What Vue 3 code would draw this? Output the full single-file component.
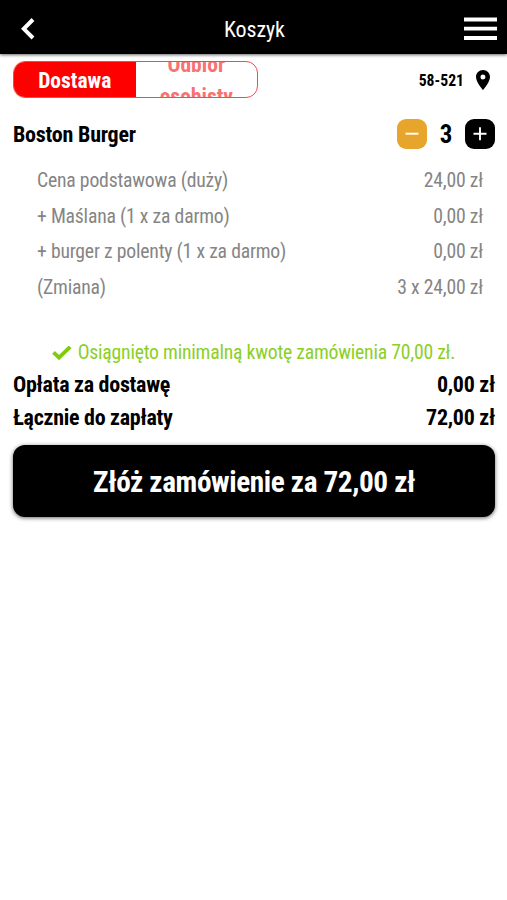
<template>
  <div class="cart-page">
    <header class="cart-header">
      <button class="icon-btn" type="button">
        <svg width="14" height="22" viewBox="0 0 14 22">
          <path d="M12 1.5L2.8 10.8L12 20" fill="none" stroke="#fff" stroke-width="4" />
        </svg>
      </button>
      <h1 class="header-title">Koszyk</h1>
      <button class="icon-btn" type="button">
        <svg width="34" height="24" viewBox="0 0 34 24">
          <path d="M1 2.5H34M1 11.7H34M1 21H34" stroke="#fff" stroke-width="3.8" />
        </svg>
      </button>
    </header>

    <section class="delivery-bar">
      <div class="delivery-switch">
        <button
          v-for="mode in modes"
          :key="mode"
          class="switch-item"
          :class="{ active: mode === activeMode }"
          type="button"
          @click="activeMode = mode"
        >
          <span>{{ mode }}</span>
        </button>
      </div>
      <div class="location">
        <span>58-521</span>
        <svg width="14" height="20" viewBox="5 2 14 20">
          <path
            d="M12 2C8.13 2 5 5.13 5 9c0 5.25 7 13 7 13s7-7.75 7-13c0-3.87-3.13-7-7-7zm0 9.5a2.5 2.5 0 1 1 0-5 2.5 2.5 0 0 1 0 5z"
          />
        </svg>
      </div>
    </section>

    <section class="product">
      <h2 class="product-name">Boston Burger</h2>
      <div class="counter">
        <button class="counter-btn minus" type="button">
          <svg width="14" height="14" viewBox="0 0 14 14">
            <path d="M0.5 6.7H13.5" stroke="#fff" stroke-width="1.9" />
          </svg>
        </button>
        <span class="counter-value">3</span>
        <button class="counter-btn" type="button">
          <svg width="14" height="14" viewBox="0 0 14 14">
            <path d="M0.5 6.7H13.5M7 0.2V13.2" stroke="#fff" stroke-width="1.9" />
          </svg>
        </button>
      </div>
    </section>

    <ul class="details">
      <li v-for="item in details" :key="item.label">
        <span>{{ item.label }}</span>
        <span>{{ item.price }}</span>
      </li>
    </ul>

    <p class="minimum">
      <svg width="20" height="15" viewBox="0 0 20 15">
        <path d="M1.5 6.4L7 11.6L18.2 0.9" fill="none" stroke="#7fcc0d" stroke-width="3.9" />
      </svg>
      <span>Osiągnięto minimalną kwotę zamówienia 70,00 zł.</span>
    </p>

    <div class="summary">
      <div v-for="row in summary" :key="row.label" class="summary-row">
        <span>{{ row.label }}</span>
        <span>{{ row.price }}</span>
      </div>
    </div>

    <button class="order-btn" type="button">Złóż zamówienie za 72,00 zł</button>
  </div>
</template>

<script setup>
import { ref } from "vue";

const modes = ["Dostawa", "Odbiór osobisty"];
const activeMode = ref("Dostawa");

const details = [
  { label: "Cena podstawowa (duży)", price: "24,00 zł" },
  { label: "+ Maślana (1 x za darmo)", price: "0,00 zł" },
  { label: "+ burger z polenty (1 x za darmo)", price: "0,00 zł" },
  { label: "(Zmiana)", price: "3 x 24,00 zł" },
];

const summary = [
  { label: "Opłata za dostawę", price: "0,00 zł" },
  { label: "Łącznie do zapłaty", price: "72,00 zł" },
];
</script>

<style>
body {
  background: #fff;
}
</style>

<style scoped>
.cart-page {
  min-height: 900px;
  font-family: "Roboto Condensed", Roboto, sans-serif;
  font-stretch: 75%;
  color: #000;
  background: #fff;
}

button {
  font: inherit;
  border: none;
  padding: 0;
  background: none;
  cursor: pointer;
}

svg {
  display: block;
  flex-shrink: 0;
}

/* header */
.cart-header {
  box-sizing: border-box;
  height: 54px;
  padding: 3px 10px 0 21px;
  display: grid;
  grid-template-columns: 203px auto 1fr;
  align-items: center;
  background: #000;
  box-shadow: 0 1px 3px rgba(0, 0, 0, 0.6);
}

.icon-btn {
  justify-self: start;
}

.icon-btn:last-child {
  justify-self: end;
}

.header-title {
  margin: 0;
  padding-top: 2px;
  font-size: 22px;
  font-weight: 400;
  letter-spacing: -0.1px;
  color: #fff;
}

/* delivery switch */
.delivery-bar {
  display: flex;
  justify-content: space-between;
  align-items: center;
  padding: 7px 17px 0 13px;
}

.delivery-switch {
  box-sizing: border-box;
  width: 245px;
  height: 37px;
  display: flex;
  border: 1px solid #f44;
  border-radius: 12px;
  overflow: hidden;
}

.switch-item {
  flex: 1;
  min-width: 0;
  display: flex;
  align-items: center;
  justify-content: center;
  padding: 2px 20px 0;
  font-size: 21.5px;
  line-height: 32px;
  font-weight: 700;
  color: #f87272;
}

.switch-item.active {
  color: #fff;
  background: #f00;
}

.location {
  display: flex;
  align-items: center;
  gap: 12px;
  padding-top: 1px;
  font-size: 15.7px;
  font-weight: 700;
}

/* product */
.product {
  display: flex;
  justify-content: space-between;
  align-items: center;
  padding: 20px 12px 0 13px;
}

.product-name {
  margin: 0;
  font-size: 22px;
  font-weight: 700;
  letter-spacing: -0.22px;
}

.counter {
  display: flex;
  align-items: center;
}

.counter-value {
  width: 38px;
  padding-top: 2px;
  text-align: center;
  font-size: 25px;
  line-height: 30px;
  font-weight: 700;
}

.counter-btn {
  width: 30px;
  height: 30px;
  display: flex;
  align-items: center;
  justify-content: center;
  border-radius: 9px;
  background: #000;
}

.counter-btn.minus {
  background: #e8a52c;
}

.details {
  margin: 0;
  padding: 13px 24px 0 37px;
  list-style: none;
  font-size: 19.7px;
  letter-spacing: -0.2px;
  color: #858585;
}

.details li {
  display: flex;
  justify-content: space-between;
  line-height: 35.5px;
}

/* summary */
.minimum {
  margin: 35px 0 0;
  display: flex;
  align-items: center;
  justify-content: center;
  gap: 6px;
  font-size: 19.7px;
  letter-spacing: -0.22px;
  line-height: 26px;
  color: #8bd024;
}

.summary {
  padding: 2px 12px 0 13px;
  font-size: 22px;
  font-weight: 700;
  letter-spacing: -0.28px;
}

.summary-row {
  display: flex;
  justify-content: space-between;
  line-height: 33px;
}

.order-btn {
  display: block;
  width: 482px;
  height: 72px;
  margin: 11px 0 0 13px;
  padding-top: 2px;
  border-radius: 12px;
  font-size: 29.3px;
  font-weight: 700;
  letter-spacing: -0.4px;
  color: #fff;
  background: #000;
  box-shadow: 0 1px 4px rgba(0, 0, 0, 0.6);
}
</style>
